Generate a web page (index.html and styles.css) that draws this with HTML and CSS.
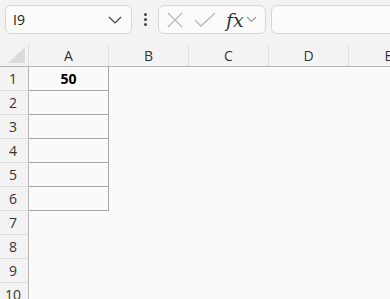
FILE: index.html
```html
<!DOCTYPE html>
<html lang="en">
<head>
    <meta charset="UTF-8">
    <title>Sheet</title>
    <link rel="stylesheet" href="styles.css">
</head>
<body>
    <div class="toolbar">
        <div class="namebox">
            <span>I9</span>
            <svg class="chev" width="14" height="8" viewBox="0 0 14 8"><path d="M1 1 L7 7 L13 1" fill="none" stroke="#444" stroke-width="1.2"/></svg>
        </div>
        <div class="dots"><i></i><i></i><i></i></div>
        <div class="fbox">
            <svg width="16" height="16" viewBox="0 0 16 16"><path d="M1 1 L15 15 M15 1 L1 15" stroke="#b8b8b8" stroke-width="1.3"/></svg>
            <svg width="22" height="16" viewBox="0 0 22 16"><path d="M1 8 L7 14 L21 1" fill="none" stroke="#b8b8b8" stroke-width="1.3"/></svg>
            <span class="fx">fx</span>
            <svg width="11" height="7" viewBox="0 0 11 7"><path d="M1 1 L5.5 5.5 L10 1" fill="none" stroke="#999" stroke-width="1.1"/></svg>
        </div>
        <div class="formula"></div>
    </div>

    <div class="sheet">
        <div class="colheads">
            <div class="corner"><span class="tri"></span></div>
            <div class="colhead">A</div>
            <div class="colhead">B</div>
            <div class="colhead">C</div>
            <div class="colhead">D</div>
            <div class="colhead">E</div>
        </div>
        <div class="row"><div class="rowhead">1</div><div class="cell bold">50</div></div>
        <div class="row"><div class="rowhead">2</div><div class="cell"></div></div>
        <div class="row"><div class="rowhead">3</div><div class="cell"></div></div>
        <div class="row"><div class="rowhead">4</div><div class="cell"></div></div>
        <div class="row"><div class="rowhead">5</div><div class="cell"></div></div>
        <div class="row"><div class="rowhead">6</div><div class="cell"></div></div>
        <div class="row"><div class="rowhead">7</div></div>
        <div class="row"><div class="rowhead">8</div></div>
        <div class="row"><div class="rowhead">9</div></div>
        <div class="row"><div class="rowhead">10</div></div>
    </div>
</body>
</html>
```
FILE: styles.css
```css
body {
    margin: 0;
    background: #fafafa;
    font-family: "Open Sans", "Noto Sans", sans-serif;
    color: #222;
    overflow: hidden;
}
.toolbar {
    display: flex;
    align-items: center;
    height: 44px;
    padding: 0 0 0 5px;
    box-sizing: border-box;
    background: #f3f3f3;
    overflow: hidden;
}
.toolbar > * {
    flex-shrink: 0;
}
.namebox, .fbox, .formula {
    height: 29px;
    box-sizing: border-box;
    border: 1px solid #d6d6d6;
    border-radius: 6px;
    background: #fbfbfb;
    display: flex;
    align-items: center;
    margin-bottom: 5px;
}
.namebox {
    width: 127px;
    padding: 0 9px 0 7px;
    justify-content: space-between;
    font-size: 14px;
    color: #222;
}
.dots {
    width: 26px;
    display: flex;
    flex-direction: column;
    align-items: center;
    gap: 2px;
    margin-bottom: 5px;
}
.dots i {
    width: 3px;
    height: 3px;
    background: #444;
    border-radius: 50%;
}
.fbox {
    width: 108px;
    padding: 0 0 0 8px;
    gap: 11px;
}
.fx {
    font-family: "DejaVu Serif", "Liberation Serif", serif;
    font-style: italic;
    font-size: 19px;
    color: #333;
    margin-left: -1px;
    margin-right: -9px;
}
.formula {
    width: 140px;
    margin-left: 5px;
}
.colheads {
    display: flex;
    height: 23px;
    background: #f3f3f3;
    border-bottom: 1px solid #b5b5b5;
    box-sizing: border-box;
}
.corner {
    width: 29px;
    flex-shrink: 0;
    border-right: 1px solid #dedede;
    box-sizing: border-box;
    position: relative;
}
.tri {
    position: absolute;
    left: 8px;
    top: 3px;
    width: 0;
    height: 0;
    border-left: 17px solid transparent;
    border-bottom: 16px solid #dadada;
}
.colhead {
    width: 80px;
    flex-shrink: 0;
    border-right: 1px solid #dedede;
    box-sizing: border-box;
    text-align: center;
    font-size: 14px;
    line-height: 22px;
    color: #333;
    padding-top: 1px;
}
.row {
    display: flex;
    height: 24px;
}
.rowhead {
    width: 29px;
    flex-shrink: 0;
    box-sizing: border-box;
    background: #f3f3f3;
    border-right: 1px solid #b5b5b5;
    border-bottom: 1px solid #dedede;
    text-align: center;
    font-size: 14px;
    line-height: 23px;
    color: #333;
    padding-right: 2px;
}
.cell {
    width: 80px;
    box-sizing: border-box;
    border-right: 1px solid #a8a8a8;
    border-bottom: 1px solid #a8a8a8;
    text-align: center;
    font-size: 14px;
    line-height: 23px;
}
.bold {
    font-weight: bold;
    color: #000;
}
```
